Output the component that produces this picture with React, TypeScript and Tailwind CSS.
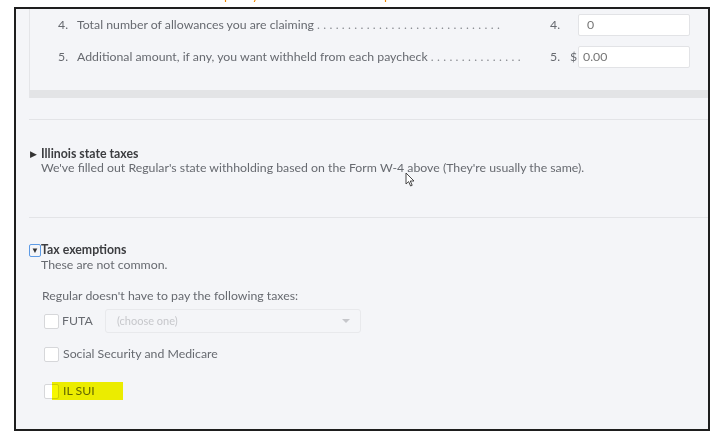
import React from "react";

const font = { fontFamily: "Lato, 'Open Sans', Arial, sans-serif" };

function Checkbox() {
  return <span className="block w-[15px] h-[15px] bg-white border border-[#d6d7da] rounded-[2px] shrink-0" />;
}

function Cursor() {
  return (
    <svg width="10" height="15" viewBox="0 0 10 15" className="absolute left-[405px] top-[172px]">
      <path d="M1 1 L1 12 L3.6 9.6 L5.6 14 L7.2 13.3 L5.3 9 L9 9 Z" fill="#fff" stroke="#333" strokeWidth="0.9" strokeLinejoin="round" />
    </svg>
  );
}

export default function App() {
  return (
    <div className="w-[724px] h-[442px] bg-white relative overflow-hidden" style={font}>
      {/* clipped orange caption above the frame */}
      <div className="h-[7px] overflow-hidden relative text-[13px] leading-[16px] text-[#f08a00]">
        <span className="absolute left-[224px] top-[-13px]">p</span>
        <span className="absolute left-[252px] top-[-13px]">y</span>
        <span className="absolute left-[384px] top-[-13px]">p</span>
      </div>

      <div className="ml-[14px] w-[696px] h-[424px] border-2 border-[#1e1e1e] bg-[#f4f5f8] overflow-hidden text-[12.3px] text-[#676a70]">
        {/* W-4 panel */}
        <div className="ml-[13px] border-l border-[#e4e5e8]">
          <div className="h-[81px] pt-[5px] pl-[28px] pr-[18px] flex flex-col gap-[10px]">
            <div className="flex items-center h-[22px]">
              <span className="w-[19px]">4.</span>
              <span className="flex-1 whitespace-nowrap overflow-hidden">
                Total number of allowances you are claiming{" "}
                <span className="tracking-[3.3px] text-[#8a8d92]">..............................</span>
              </span>
              <span className="w-[28px] ml-[24px]">4.</span>
              <span className="w-[112px] h-[22px] bg-white border border-[#e2e3e6] rounded-[2px] pl-[8px] flex items-center text-[#777]">0</span>
            </div>
            <div className="flex items-center h-[22px]">
              <span className="w-[19px]">5.</span>
              <span className="flex-1 whitespace-nowrap overflow-hidden">
                Additional amount, if any, you want withheld from each paycheck{" "}
                <span className="tracking-[3.3px] text-[#8a8d92]">...............</span>
              </span>
              <span className="w-[20px] ml-[24px]">5.</span>
              <span className="w-[8px]">$</span>
              <span className="w-[112px] h-[22px] bg-white border border-[#e2e3e6] rounded-[2px] pl-[4px] flex items-center text-[#777]">0.00</span>
            </div>
          </div>
          <div className="h-[8px] bg-[#e3e4e6]" />
        </div>

        {/* Illinois state taxes */}
        <div className="ml-[13px] mt-[21px] border-t border-[#e3e4e7]">
          <div className="h-[97px] pt-[27px] relative">
            <div className="flex items-center h-[14px] leading-[14px]">
              <span className="w-[12px] pl-[1px] text-[9px] text-[#333]">▶</span>
              <span className="font-bold text-[#3c3d40]">Illinois state taxes</span>
            </div>
            <div className="pl-[12px] h-[14px] leading-[14px]">
              We've filled out Regular's state withholding based on the Form W-4 above (They're usually the same).
            </div>
          </div>
        </div>

        {/* Tax exemptions */}
        <div className="ml-[13px] border-t border-[#e3e4e7] pt-[25px]">
          <div className="flex items-center h-[14px] leading-[14px]">
            <span className="w-[12px] h-[13px] border border-[#5d9be6] rounded-[2px] flex items-center justify-center text-[8px] text-[#333]">▼</span>
            <span className="font-bold text-[#3c3d40]">Tax exemptions</span>
          </div>
          <div className="pl-[12px] h-[16px] leading-[16px]">These are not common.</div>

          <div className="pl-[13px] mt-[15px] h-[16px] leading-[16px]">Regular doesn't have to pay the following taxes:</div>

          <div className="pl-[15px] mt-[5px] flex items-center h-[24px]">
            <Checkbox />
            <span className="ml-[3px] w-[43px]">FUTA</span>
            <span className="w-[256px] h-[24px] border border-[#e8e9ec] rounded-[3px] flex items-center justify-between pl-[11px] pr-[10px] text-[11px] text-[#c6c7cb]">
              (choose one)
              <span className="w-0 h-0 border-l-[4px] border-r-[4px] border-t-[4px] border-l-transparent border-r-transparent border-t-[#c6c7cb]" />
            </span>
          </div>

          <div className="pl-[15px] mt-[14px] flex items-center h-[15px]">
            <Checkbox />
            <span className="ml-[4px]">Social Security and Medicare</span>
          </div>

          <div className="pl-[15px] mt-[22px] flex items-center h-[15px] relative">
            <Checkbox />
            <span className="ml-[4px]">IL SUI</span>
            <span className="absolute left-[23px] top-[-2px] w-[71px] h-[18px] bg-[#f6f600] mix-blend-multiply" />
          </div>
        </div>
      </div>

      <Cursor />
    </div>
  );
}
